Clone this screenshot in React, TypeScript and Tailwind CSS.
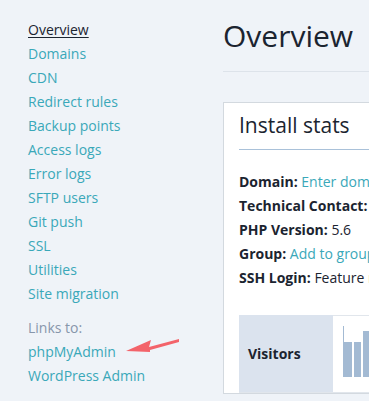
const navLinks = [
  'Domains',
  'CDN',
  'Redirect rules',
  'Backup points',
  'Access logs',
  'Error logs',
  'SFTP users',
  'Git push',
  'SSL',
  'Utilities',
  'Site migration',
]

const infoRows: { label: string; value: string; link?: boolean }[] = [
  { label: 'Domain:', value: 'Enter domain', link: true },
  { label: 'Technical Contact:', value: 'Add contact', link: true },
  { label: 'PHP Version:', value: '5.6' },
  { label: 'Group:', value: 'Add to group', link: true },
  { label: 'SSH Login:', value: 'Feature not available' },
]

function Arrow() {
  return (
    <svg width="60" height="20" viewBox="0 0 60 20" className="absolute left-[124px] top-[336px]">
      <polygon points="2,15 27,4 25,11 55,3 55,6 26,14 26,16" fill="#f3636a" />
    </svg>
  )
}

export default function App() {
  return (
    <div
      className="relative flex h-[401px] w-[369px] overflow-hidden bg-[#eff3f8] text-[14px]"
      style={{ fontFamily: '"Open Sans", "Noto Sans", sans-serif' }}
    >
      <nav className="w-[223px] shrink-0 pl-[28px] pt-[18px] leading-[24px]">
        <div>
          <a className="text-[#1b2430] underline underline-offset-2">Overview</a>
        </div>
        {navLinks.map((l) => (
          <div key={l} className="text-[#3aa8b9]">
            {l}
          </div>
        ))}
        <div className="mt-[10px] text-[#8796ab]">Links to:</div>
        <div className="text-[#3aa8b9]">phpMyAdmin</div>
        <div className="text-[#3aa8b9]">WordPress Admin</div>
      </nav>

      <main className="min-w-0 flex-1">
        <h1 className="pt-[16px] pb-[15px] text-[30px] leading-[40px] text-[#1b2430]">Overview</h1>
        <div className="h-px w-full bg-[#dde3ea]" />
        <section className="mt-[30px] w-[420px] border border-[#d3d9df] bg-white px-[15px]">
          <h2 className="pt-[9px] pb-[10px] text-[21px] leading-[27px] text-[#1b2430]">Install stats</h2>
          <div className="h-px bg-[#a9c1d9]" />
          <div className="pt-[20px] leading-[24px] text-[#1b2430]">
            {infoRows.map((r) => (
              <div key={r.label} className="whitespace-nowrap">
                <span className="font-bold">{r.label}</span>{' '}
                <span className={r.link ? 'text-[#3aa8b9]' : ''}>{r.value}</span>
              </div>
            ))}
          </div>
          <div className="mt-[25px] flex h-[78px] border-b border-[#e1e6ec]">
            <div className="flex w-[94px] items-center bg-[#dbe3ee] pl-[9px] font-bold text-[#1b2430]">Visitors</div>
            <div className="flex flex-1 items-end border-t border-[#e1e6ec] pb-[15px] pl-[10px]">
              <div className="flex h-[51px] items-end gap-[2px] border-l border-[#a3bad3]">
                <div className="h-[35px] w-[8px] bg-[#a3bad3]" />
                <div className="h-[35px] w-[7px] bg-[#a3bad3]" />
                <div className="h-[46px] w-[8px] bg-[#a3bad3]" />
                <div className="h-[30px] w-[8px] bg-[#a3bad3]" />
              </div>
            </div>
          </div>
        </section>
      </main>
      <Arrow />
    </div>
  )
}
